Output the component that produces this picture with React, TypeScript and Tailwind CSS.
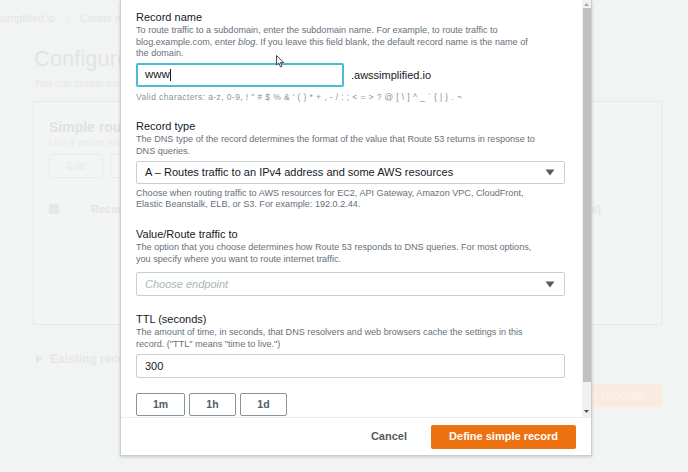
import React from "react";

const Caret = () => (
  <svg width="10" height="7" viewBox="0 0 10 7" className="shrink-0">
    <path d="M0.5 0.5 L9.5 0.5 L5 6.5 Z" fill="#545b64" />
  </svg>
);

const Label = ({ children }: { children: React.ReactNode }) => (
  <div className="text-[11px] leading-[16px] text-[#16191f]">{children}</div>
);

const Desc = ({ children }: { children: React.ReactNode }) => (
  <div className="text-[9.1px] leading-[11.5px] text-[#687078] whitespace-nowrap">{children}</div>
);

export default function App() {
  return (
    <div className="w-[688px] h-[472px] bg-[#f2f3f3] relative overflow-hidden font-['Liberation_Sans',Arial,sans-serif]">
      {/* Faded background page */}
      <div className="flex flex-col">
        <div className="flex items-center h-[14px] mt-[12px] text-[10.5px] text-[#e3e6e6] whitespace-nowrap">
          <span>simplified.io</span>
          <span className="ml-[12px]">›</span>
          <span className="ml-[10px]">Create record</span>
        </div>
        <div className="ml-[34px] mt-[19px] text-[22px] leading-[28px] text-[#e2e5e5] whitespace-nowrap">
          Configure records
        </div>
        <div className="ml-[34px] mt-[3px] text-[10.5px] leading-[14px] text-[#e6e8e8] whitespace-nowrap">
          You can create multiple records at once.
        </div>
        <div className="ml-[33px] mt-[11px] w-[629px] h-[224px] border border-[#e8eaea] bg-[#f3f4f4] flex flex-col pl-[15px] pr-[60px]">
          <div className="mt-[16px] text-[14px] leading-[18px] font-bold text-[#e0e3e3] whitespace-nowrap">
            Simple routing records to add to awssimplified.io
          </div>
          <div className="text-[10px] leading-[13px] text-[#e9ebeb] whitespace-nowrap">
            Use if you're routing traffic to a single resource.
          </div>
          <div className="flex gap-[7px] mt-[5px]">
            <div className="w-[54px] h-[24px] border border-[#eaecec] rounded-[2px] flex items-center justify-center text-[10px] font-bold text-[#eaecec]">
              Edit
            </div>
            <div className="w-[60px] h-[24px] border border-[#eaecec] rounded-[2px]" />
          </div>
          <div className="flex items-center mt-[26px] h-[10px]">
            <div className="w-[10px] h-[10px] bg-[#e6e8e8] rounded-[1px]" />
            <div className="ml-[32px] text-[11px] font-bold text-[#e3e5e5] whitespace-nowrap">Record name</div>
            <div className="ml-auto text-[11px] font-bold text-[#e3e5e5] whitespace-nowrap">TTL (seconds)</div>
          </div>
        </div>
        <div className="ml-[36px] mt-[27px] flex items-center h-[14px] gap-[8px]">
          <svg width="6" height="8" viewBox="0 0 6 8">
            <path d="M0 0 L6 4 L0 8 Z" fill="#e3e5e5" />
          </svg>
          <span className="text-[12px] font-bold text-[#e6e8e8] whitespace-nowrap">Existing records</span>
        </div>
        <div className="self-end mr-[26px] mt-[18px] h-[23px] w-[120px] bg-[#f9ebe0] rounded-[2px] flex items-center justify-end pr-[17px] text-[12px] font-bold text-[#fbf2ea] whitespace-nowrap">
          Create records
        </div>
      </div>

      {/* Modal */}
      <div className="absolute left-[120px] top-0 w-[472px] h-[456px] bg-white border-l border-r border-b border-[#c9cfcf] shadow-[0_1px_3px_rgba(0,0,0,0.18)] flex flex-col">
        <div className="flex h-[417px]">
          <div className="flex-1 overflow-hidden pl-[15px] pr-[17px] pt-[9px] flex flex-col">
            <Label>Record name</Label>
            <Desc>
              To route traffic to a subdomain, enter the subdomain name. For example, to route traffic to
              <br />
              blog.example.com, enter <i>blog</i>. If you leave this field blank, the default record name is the name of
              <br />
              the domain.
            </Desc>
            <div className="flex items-center mt-[3.5px]">
              <div className="w-[208px] h-[24px] border-2 border-[#48bcd6] rounded-[2px] flex items-center pl-[7px] text-[11.5px] text-[#16191f]">
                www<span className="w-px h-[12px] bg-[#16191f]" />
              </div>
              <span className="ml-[7px] text-[11px] text-[#16191f]">.awssimplified.io</span>
            </div>
            <div className="mt-[4px] text-[8.5px] leading-[12px] text-[#879596] whitespace-nowrap tracking-[0.4px]">
              Valid characters: a-z, 0-9, ! " # $ % &amp; ' ( ) * + , - / : ; &lt; = &gt; ? @ [ \ ] ^ _ ` {"{"} | {"}"} . ~
            </div>

            <div className="mt-[15px]">
              <Label>Record type</Label>
            </div>
            <Desc>
              The DNS type of the record determines the format of the value that Route 53 returns in response to
              <br />
              DNS queries.
            </Desc>
            <div className="mt-[4px] h-[23px] border border-[#c9cfcf] rounded-[2px] flex items-center pl-[8px] pr-[9px] text-[11px] text-[#16191f]">
              <span className="flex-1 whitespace-nowrap">A – Routes traffic to an IPv4 address and some AWS resources</span>
              <Caret />
            </div>
            <div className="mt-[3.5px]">
              <Desc>
                Choose when routing traffic to AWS resources for EC2, API Gateway, Amazon VPC, CloudFront,
                <br />
                Elastic Beanstalk, ELB, or S3. For example: 192.0.2.44.
              </Desc>
            </div>

            <div className="mt-[15.5px]">
              <Label>Value/Route traffic to</Label>
            </div>
            <Desc>
              The option that you choose determines how Route 53 responds to DNS queries. For most options,
              <br />
              you specify where you want to route internet traffic.
            </Desc>
            <div className="mt-[7px] h-[24px] border border-[#c9cfcf] rounded-[2px] flex items-center pl-[8px] pr-[9px] text-[11px]">
              <span className="flex-1 italic text-[#aab7b8]">Choose endpoint</span>
              <Caret />
            </div>

            <div className="mt-[15px]">
              <Label>TTL (seconds)</Label>
            </div>
            <Desc>
              The amount of time, in seconds, that DNS resolvers and web browsers cache the settings in this
              <br />
              record. ("TTL" means "time to live.")
            </Desc>
            <div className="mt-[4px] h-[24px] border border-[#c9cfcf] rounded-[2px] flex items-center pl-[8px] text-[11px] text-[#16191f]">
              300
            </div>
            <div className="mt-[15px] flex gap-[4px]">
              <div className="w-[49px] h-[23px] border border-[#879596] rounded-[2px] flex items-center justify-center text-[10.5px] font-bold text-[#545b64]">
                1m
              </div>
              <div className="w-[47px] h-[23px] border border-[#879596] rounded-[2px] flex items-center justify-center text-[10.5px] font-bold text-[#545b64]">
                1h
              </div>
              <div className="w-[47px] h-[23px] border border-[#879596] rounded-[2px] flex items-center justify-center text-[10.5px] font-bold text-[#545b64]">
                1d
              </div>
            </div>
          </div>
          {/* scrollbar */}
          <div className="w-[9px] bg-[#f1f1f1] flex flex-col items-center">
            <div className="h-[8px] flex items-center justify-center">
              <svg width="5" height="3" viewBox="0 0 5 3">
                <path d="M0 3 L2.5 0 L5 3 Z" fill="#a3a3a3" />
              </svg>
            </div>
            <div className="w-[8px] h-[374px] bg-[#c1c1c1]" />
            <div className="flex-1" />
            <div className="h-[12px] flex items-center justify-center">
              <svg width="5" height="3" viewBox="0 0 5 3">
                <path d="M0 0 L5 0 L2.5 3 Z" fill="#505050" />
              </svg>
            </div>
          </div>
        </div>
        <div className="flex-1 border-t border-[#eaeded] flex items-center justify-end pr-[15px] gap-[24px]">
          <span className="text-[11px] font-bold text-[#545b64]">Cancel</span>
          <div className="w-[145px] h-[24px] bg-[#ec7211] rounded-[2px] flex items-center justify-center text-[11px] font-bold text-white">
            Define simple record
          </div>
        </div>
      </div>

      {/* mouse cursor */}
      <svg className="absolute left-[276px] top-[55px]" width="9" height="13" viewBox="0 0 9 13">
        <path d="M0.5 0.5 L0.5 10 L2.8 8 L4.5 12 L6 11.3 L4.4 7.5 L7.8 7.5 Z" fill="#ffffff" stroke="#3a3a3a" strokeWidth="0.9" strokeLinejoin="round" />
      </svg>
    </div>
  );
}
